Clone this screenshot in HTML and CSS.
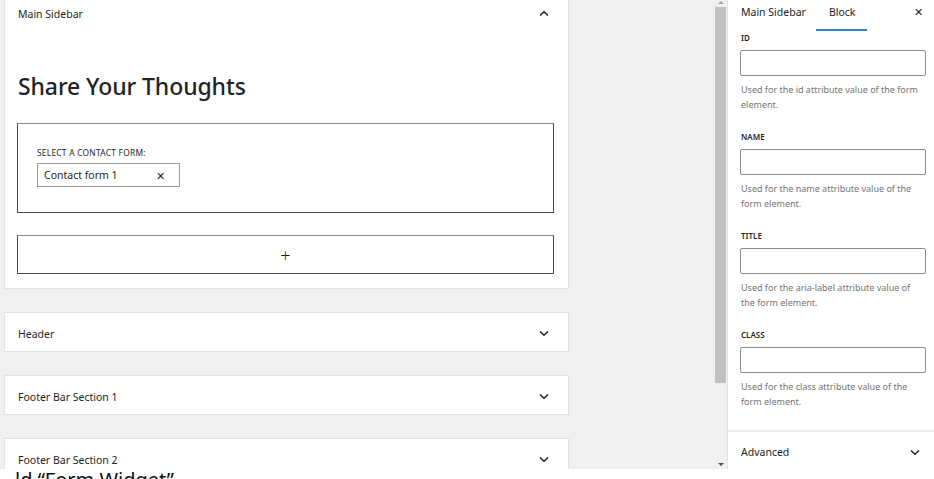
FILE: index.html
```html
<!DOCTYPE html>
<html>
<head>
<meta charset="utf-8">
<link rel="stylesheet" href="styles.css">
</head>
<body>
<div class="app">
  <div class="editor">
    <div class="areas">
      <section class="card open">
        <div class="card-head">
          <span>Main Sidebar</span>
          <svg class="chev" width="10" height="7" viewBox="0 0 10 7"><path d="M1 5.5 L5 1.8 L9 5.5" fill="none" stroke="#1e1e1e" stroke-width="1.5"/></svg>
        </div>
        <h2 class="title">Share Your Thoughts</h2>
        <div class="cf-box">
          <div class="cf-label">SELECT A CONTACT FORM:</div>
          <div class="cf-select"><span>Contact form 1</span><span class="x">✕</span></div>
        </div>
        <div class="add-box"><span class="plus">+</span></div>
      </section>
      <section class="card closed">
        <div class="card-head"><span>Header</span>
          <svg class="chev" width="10" height="7" viewBox="0 0 10 7"><path d="M1 1.5 L5 5.2 L9 1.5" fill="none" stroke="#1e1e1e" stroke-width="1.5"/></svg>
        </div>
      </section>
      <section class="card closed">
        <div class="card-head"><span>Footer Bar Section 1</span>
          <svg class="chev" width="10" height="7" viewBox="0 0 10 7"><path d="M1 1.5 L5 5.2 L9 1.5" fill="none" stroke="#1e1e1e" stroke-width="1.5"/></svg>
        </div>
      </section>
      <section class="card closed">
        <div class="card-head"><span>Footer Bar Section 2</span>
          <svg class="chev" width="10" height="7" viewBox="0 0 10 7"><path d="M1 1.5 L5 5.2 L9 1.5" fill="none" stroke="#1e1e1e" stroke-width="1.5"/></svg>
        </div>
      </section>
    </div>
    <div class="scrollbar">
      <div class="arrow up"></div>
      <div class="thumb"></div>
      <div class="track"></div>
      <div class="arrow down"></div>
    </div>
  </div>
  <aside class="sidebar">
    <div class="tabs">
      <span class="tab">Main Sidebar</span>
      <span class="tab active">Block</span>
      <span class="close">✕</span>
    </div>
    <div class="fields">
      <div class="field">
        <div class="label">ID</div>
        <div class="input"></div>
        <p class="help">Used for the id attribute value of the form element.</p>
      </div>
      <div class="field">
        <div class="label">NAME</div>
        <div class="input"></div>
        <p class="help">Used for the name attribute value of the form element.</p>
      </div>
      <div class="field">
        <div class="label">TITLE</div>
        <div class="input"></div>
        <p class="help">Used for the aria-label attribute value of the form element.</p>
      </div>
      <div class="field">
        <div class="label">CLASS</div>
        <div class="input"></div>
        <p class="help">Used for the class attribute value of the form element.</p>
      </div>
    </div>
    <div class="advanced">
      <span>Advanced</span>
      <svg width="10" height="7" viewBox="0 0 10 7"><path d="M1 1.5 L5 5.2 L9 1.5" fill="none" stroke="#1e1e1e" stroke-width="1.5"/></svg>
    </div>
  </aside>
</div>
<div class="below">ld “Form Widget”</div>
</body>
</html>
```

FILE: styles.css
```css
* { box-sizing: border-box; }
html, body { margin: 0; padding: 0; background: #fff; }
body {
  font-family: "Noto Sans", "Open Sans", sans-serif;
  color: #1e1e1e;
  width: 934px;
  height: 479px;
  overflow: hidden;
}
.app {
  display: flex;
  height: 469px;
  overflow: hidden;
}
.editor {
  width: 727px;
  background: #f0f0f0;
  display: flex;
  flex-shrink: 0;
}
.areas {
  width: 714px;
  padding-left: 4px;
  display: flex;
  flex-direction: column;
  gap: 23px;
}
.card {
  width: 565px;
  background: #fff;
  border: 1px solid #e2e2e2;
}
.card.open {
  margin-top: -1px;
  padding: 0 14px 14px 12px;
}
.card-head {
  display: flex;
  align-items: center;
  justify-content: space-between;
  font-size: 10.5px;
  color: #1e1e1e;
}
.card.open .card-head {
  height: 27px;
  padding-left: 1px;
  padding-right: 5px;
}
.card.closed .card-head {
  height: 38px;
  padding: 3px 19px 0 13px;
}
.chev { display: block; }
.title {
  margin: 44px 0 0 1px;
  font-size: 23px;
  font-weight: 500;
  line-height: 30px;
  color: #1d2327;
  letter-spacing: -0.1px;
}
.cf-box {
  margin-top: 22px;
  height: 90px;
  border: 1px solid #4a4a4a;
  border-top-color: #8a8a8a;
  padding: 23px 0 0 19px;
}
.cf-label {
  font-size: 8.4px;
  line-height: 11px;
  color: #1e1e1e;
  letter-spacing: 0.25px;
}
.cf-select {
  margin-top: 5px;
  width: 143px;
  height: 24px;
  border: 1px solid #9a9a9a;
  display: flex;
  align-items: center;
  justify-content: space-between;
  padding: 0 14px 0 6px;
  font-size: 10.5px;
  color: #1e1e1e;
}
.cf-select .x { font-size: 11px; font-weight: 500; }
.add-box {
  margin-top: 22px;
  height: 39px;
  border: 1px solid #4a4a4a;
  border-top-color: #8a8a8a;
  display: flex;
  align-items: center;
  justify-content: center;
}
.plus { font-size: 18px; font-weight: 300; color: #1e1e1e; line-height: 18px; }
.scrollbar {
  width: 13px;
  display: flex;
  flex-direction: column;
  align-items: center;
  background: #f0f0f0;
}
.arrow { width: 0; height: 0; border-left: 3px solid transparent; border-right: 3px solid transparent; }
.arrow.up { border-bottom: 3px solid #a3a3a3; margin-top: 1px; margin-bottom: 3px; }
.arrow.down { border-top: 3px solid #505050; margin-bottom: 3px; }
.thumb { width: 11px; height: 376px; background: #c1c1c1; }
.track { flex: 1; }
.sidebar {
  width: 207px;
  background: #fff;
  border-left: 1px solid #e2e2e2;
  display: flex;
  flex-direction: column;
}
.tabs {
  height: 31px;
  display: flex;
  align-items: stretch;
  padding-left: 13px;
  font-size: 10.5px;
}
.tab { display: flex; align-items: center; padding-bottom: 8px; }
.tab.active {
  margin-left: 10px;
  padding-left: 13px;
  padding-right: 12px;
  box-shadow: inset 0 -2px 0 #3582c4;
}
.close { margin-left: auto; margin-right: 11px; font-size: 11px; display: flex; align-items: center; padding-bottom: 8px; }
.fields {
  padding: 0 8px 0 12px;
  flex: 1;
}
.field { height: 99px; }
.label {
  font-size: 8px;
  line-height: 11px;
  font-weight: 600;
  padding-left: 1px;
  padding-top: 1px;
  color: #1e1e1e;
}
.input {
  margin-top: 7px;
  height: 26px;
  border: 1px solid #8c8c8c;
  border-radius: 2px;
}
.help {
  margin: 6px 0 0 1px;
  font-size: 9px;
  line-height: 15px;
  color: #757575;
}
.advanced {
  border-top: 2px solid #ececec;
  height: 39px;
  flex-shrink: 0;
  display: flex;
  align-items: center;
  justify-content: space-between;
  padding: 3px 14px 0 13px;
  font-size: 10.5px;
}
.below {
  height: 10px;
  overflow: hidden;
  padding: 1px 0 0 15px;
  font-size: 20px;
  line-height: 20px;
  color: #111;
}
```
